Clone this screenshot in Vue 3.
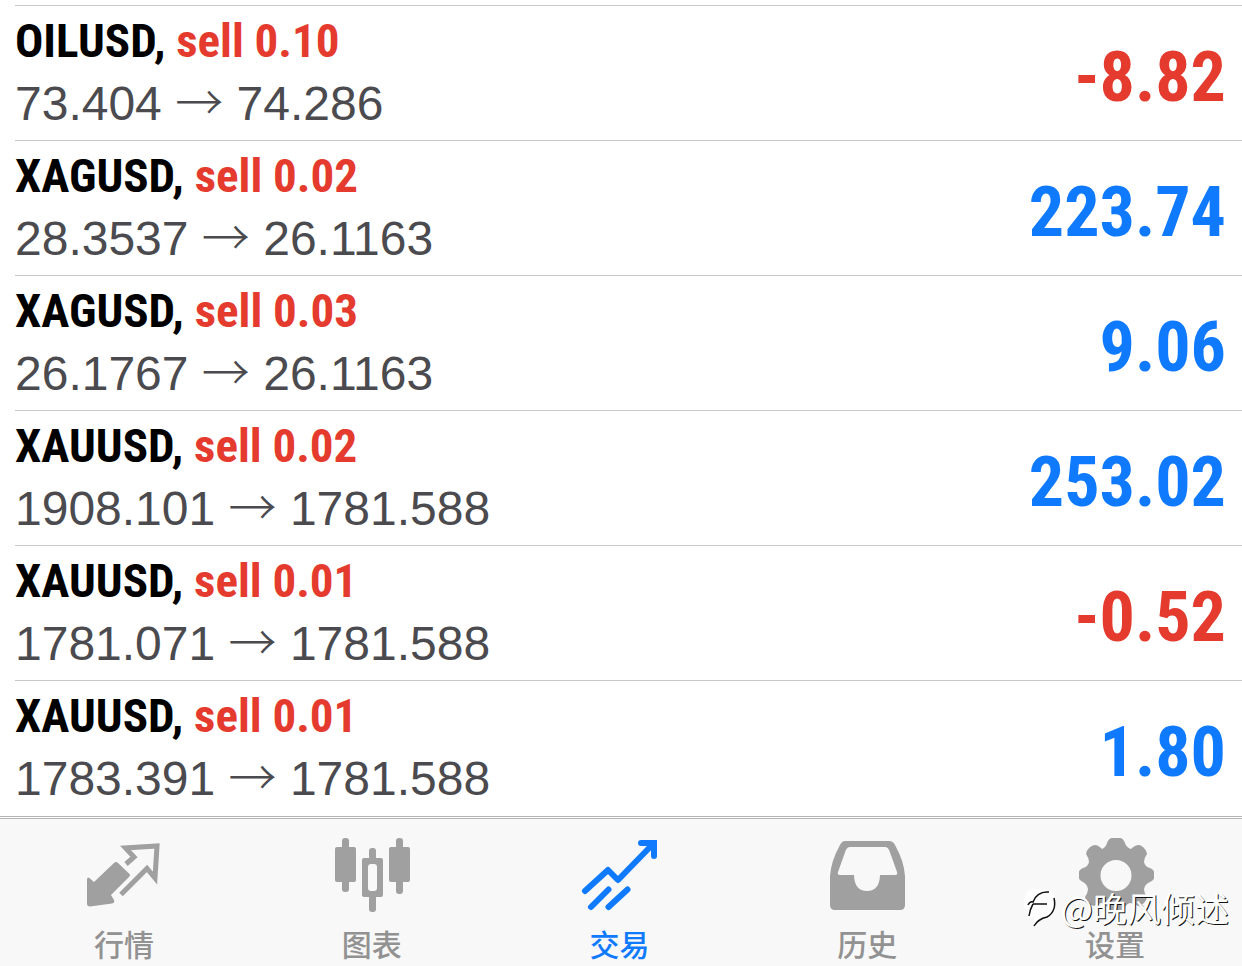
<script setup>
const positions = [
  { id: 1, symbol: 'OILUSD', side: 'sell 0.10', open: '73.404', current: '74.286', profit: '-8.82' },
  { id: 2, symbol: 'XAGUSD', side: 'sell 0.02', open: '28.3537', current: '26.1163', profit: '223.74' },
  { id: 3, symbol: 'XAGUSD', side: 'sell 0.03', open: '26.1767', current: '26.1163', profit: '9.06' },
  { id: 4, symbol: 'XAUUSD', side: 'sell 0.02', open: '1908.101', current: '1781.588', profit: '253.02' },
  { id: 5, symbol: 'XAUUSD', side: 'sell 0.01', open: '1781.071', current: '1781.588', profit: '-0.52' },
  { id: 6, symbol: 'XAUUSD', side: 'sell 0.01', open: '1783.391', current: '1781.588', profit: '1.80' },
]
</script>

<template>
  <div class="screen">
    <main class="list-area">
      <ul class="positions">
        <li v-for="p in positions" :key="p.id" class="position">
          <div class="details">
            <div class="title">{{ p.symbol }}, <span class="side">{{ p.side }}</span></div>
            <div class="prices">{{ p.open }} <span class="arrow">→</span> {{ p.current }}</div>
          </div>
          <div class="profit" :class="{ loss: p.profit.startsWith('-') }">{{ p.profit }}</div>
        </li>
      </ul>
    </main>

    <nav class="tabs">
      <button type="button" class="tab">
        <svg class="icon" viewBox="0 0 80 80" aria-hidden="true">
          <path d="M34 27 L45 37.500 Q47 39 45 41 L27 59 L30 64 Q31 67 28 67.500 L6 70.500 Q3 70.500 3 67.500 V44 Q3 40 6 42.500 L10 46 L30 27 Q32 25 34 27 Z" fill="currentColor" />
          <path d="M42 28 L50 21 L41.500 12 L73 10 L71 42 L63 32.500 L37 58.500" fill="none" stroke="currentColor" stroke-width="5" />
        </svg>
        <span>行情</span>
      </button>
      <button type="button" class="tab">
        <svg class="icon" viewBox="0 0 80 80" aria-hidden="true">
          <g fill="currentColor">
            <rect x="10" y="2" width="7" height="54" rx="3" /><rect x="3" y="11" width="21" height="35" rx="2" />
            <rect x="64" y="2" width="7" height="56" rx="3" /><rect x="57" y="11" width="21" height="35" rx="2" />
            <rect x="37" y="12" width="7" height="12" rx="3" /><rect x="37" y="58" width="7" height="18" rx="3" />
            <path fill-rule="evenodd" d="M32 22 h17 q2 0 2 2 v35 q0 2 -2 2 h-17 q-2 0 -2 -2 v-35 q0 -2 2 -2 Z M39 28 q-3 0 -3 3 v21 q0 3 3 3 h3 q3 0 3 -3 v-21 q0 -3 -3 -3 Z" />
          </g>
        </svg>
        <span>图表</span>
      </button>
      <button type="button" class="tab active">
        <svg class="icon" viewBox="0 0 80 80" aria-hidden="true">
          <g fill="none" stroke="currentColor" stroke-width="6" stroke-linecap="round" stroke-linejoin="round">
            <path d="M6 55 L29 34 L39 44 L73 9" />
            <path d="M62 7 H75 V20" stroke-linejoin="miter" />
            <path d="M12 71 L29.500 53.500 M29.500 71 L48.500 53.500" />
          </g>
        </svg>
        <span>交易</span>
      </button>
      <button type="button" class="tab">
        <svg class="icon" viewBox="0 0 80 80" aria-hidden="true">
          <path fill="currentColor" fill-rule="evenodd" d="M18 5 H62 Q66 5 68 9 Q77 25 78 40 V69 Q78 74 73 74 H8 Q3 74 3 69 V40 Q4 25 13 9 Q15 5 18 5 Z M23 11 Q20 11 18.500 15 L11 36 Q10 39 13 39 H27 Q27.500 55 40 55 Q52.500 55 53 39 H68 Q71 39 70 36 L62.500 15 Q61 11 58 11 Z" />
        </svg>
        <span>历史</span>
      </button>
      <button type="button" class="tab">
        <svg class="icon" viewBox="0 0 80 80" aria-hidden="true">
          <path fill="currentColor" fill-rule="evenodd" d="M37 2 H45 Q48 2 50 7 Q51 11 56 13 Q60 9 64 9 Q66 9 69 12 Q72 15 72 18 Q69 22 69 26 Q70 31 75 32 Q79 34 79 36 V42 Q79 44 75 46 Q70 48 69 53 Q69 57 72 61 Q72 64 69 67 Q66 70 63 70 Q59 67 55 67 Q51 68 49 73 Q48 77 45 77 H37 Q34 77 33 73 Q31 68 27 67 Q23 67 19 70 Q16 70 13 67 Q10 64 10 61 Q13 57 13 53 Q12 48 8 46 Q4 44 4 42 V36 Q4 34 8 32 Q13 31 14 26 Q14 22 11 18 Q11 15 14 12 Q17 9 20 9 Q23 9 27 13 Q31 11 32 7 Q34 2 37 2 Z M41 24 A15.500 15.500 0 1 0 41 55 A15.500 15.500 0 1 0 41 24 Z" />
        </svg>
        <span>设置</span>
      </button>
    </nav>

    <div class="watermark">
      <svg class="mark" viewBox="0 0 36 44" aria-hidden="true">
        <path d="M1 14 Q2 4 11 3 Q18 5 21 3 Q33 5 32 18 Q30 29 20 33 Q14 35 11 40 L11 30 Q4 33 5 26 Q0 20 1 14 Z" fill="#fff" />
        <path d="M6 30 Q7 23 10 18 M5 19 Q7 15 10 16 Q14 5 26 6 M10 18 H24 M31 12 Q34 25 24 31 Q15 33 11 40" fill="none" stroke="#111" stroke-width="1.500" />
      </svg>
      <span>@晚风倾述</span>
    </div>
  </div>
</template>

<style>
body {
  margin: 0;
  background: #fff;
}
</style>

<style scoped>
.screen {
  position: relative;
  display: flex;
  flex-direction: column;
  min-height: 100vh;
  background: #fff;
  font-family: "Liberation Sans", Arial, "Noto Sans CJK SC", sans-serif;
}
.list-area {
  flex: 1;
  padding: 5px 0 0 15px;
}
.positions {
  margin: 0;
  padding: 0;
  list-style: none;
}
.position {
  display: flex;
  align-items: center;
  justify-content: space-between;
  box-sizing: border-box;
  min-height: 135px;
  padding-right: 16px;
  border-top: 1px solid #c8c7cc;
}
.details {
  padding-bottom: 2px;
}
.title {
  color: #000;
  font: bold 47px/64px "Roboto Condensed", "Arial Narrow", sans-serif;
}
.side {
  color: #e53b2e;
}
.prices {
  color: #4b4b4f;
  font-size: 48px;
  line-height: 62px;
}
.arrow {
  font-family: "Noto Sans CJK SC", sans-serif;
  font-weight: 300;
  line-height: 48px;
}
.profit {
  padding-top: 8px;
  color: #107afe;
  font: bold 70px/80px "Roboto Condensed", "Arial Narrow", sans-serif;
}
.profit.loss {
  color: #e53b2e;
}
.tabs {
  display: flex;
  padding: 17px 3px 0 0;
  border-top: 3px double #b4b4b4;
  background: #f8f8f8;
  background-clip: padding-box;
}
.tab {
  flex: 1;
  display: flex;
  flex-direction: column;
  align-items: center;
  gap: 6px;
  padding: 0 0 2px;
  border: 0;
  background: none;
  color: #929292;
  font: 500 30px/42px "Noto Sans CJK SC", sans-serif;
}
.icon {
  width: 80px;
  height: 80px;
  color: #a0a0a0;
}
.tab.active,
.tab.active .icon {
  color: #107afe;
}
.watermark {
  position: absolute;
  right: 13px;
  bottom: 34px;
  display: flex;
  align-items: center;
  gap: 2px;
  color: #fff;
  font: 34px/48px "Noto Sans CJK SC", sans-serif;
  text-shadow: 1px 1px 0 #111;
  pointer-events: none;
}
.mark {
  width: 36px;
  height: 44px;
}
</style>
